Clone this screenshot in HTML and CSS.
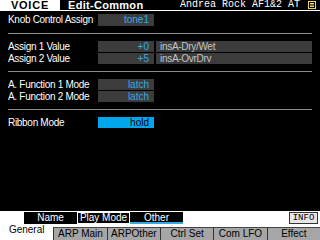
FILE: index.html
```html
<!DOCTYPE html>
<html>
<head>
<meta charset="utf-8">
<link rel="stylesheet" href="styles.css">
</head>
<body>
<div class="screen">
  <header class="top">
    <div class="mode">VOICE</div>
    <div class="title">Edit-Common</div>
    <div class="pname">Andrea Rock AF1&amp;2 AT</div>
    <svg class="icon" width="8" height="8" viewBox="0 0 8 8">
      <rect x="0.5" y="0.5" width="7" height="7" fill="#000" stroke="#ecd35a"/>
      <rect x="2" y="2" width="4" height="1" fill="#ecd35a"/>
      <rect x="2" y="3.5" width="4" height="1" fill="#ecd35a"/>
      <rect x="2" y="5" width="4" height="1" fill="#ecd35a"/>
    </svg>
  </header>
  <div class="rule-top"></div>
  <main class="content">
    <div class="row r1"><span class="label">Knob Control Assign</span><span class="val">tone1</span></div>
    <div class="sep"></div>
    <div class="group">
      <div class="row"><span class="label">Assign 1 Value</span><span class="val">+0</span><span class="wide">insA-Dry/Wet</span></div>
      <div class="row"><span class="label">Assign 2 Value</span><span class="val">+5</span><span class="wide">insA-OvrDrv</span></div>
    </div>
    <div class="sep"></div>
    <div class="group">
      <div class="row"><span class="label">A. Function 1 Mode</span><span class="val">latch</span></div>
      <div class="row"><span class="label">A. Function 2 Mode</span><span class="val">latch</span></div>
    </div>
    <div class="sep"></div>
    <div class="group">
      <div class="row"><span class="label">Ribbon Mode</span><span class="val sel">hold</span></div>
    </div>
  </main>
  <div class="subbar">
    <span class="sub">Name</span>
    <span class="sub boxed">Play Mode</span>
    <span class="sub current">Other</span>
    <span class="info">INFO</span>
  </div>
  <nav class="tabs">
    <span class="tab active">General</span>
    <span class="tab">ARP Main</span>
    <span class="tab">ARPOther</span>
    <span class="tab">Ctrl Set</span>
    <span class="tab">Com LFO</span>
    <span class="tab">Effect</span>
  </nav>
</div>
</body>
</html>
```

FILE: styles.css
```css
* { box-sizing: border-box; margin: 0; padding: 0; }
html, body { margin: 0; background: #000; }
body { width: 320px; height: 240px; overflow: hidden; font-family: "Liberation Sans", Arial, sans-serif; }

.screen { width: 320px; height: 240px; display: flex; flex-direction: column; background: #000; color: #fff; }

.top { height: 10px; display: flex; align-items: flex-start; }
.mode { width: 60px; height: 10px; background: #fff; color: #000; font-weight: bold; font-size: 11px; line-height: 11px; text-align: center; letter-spacing: 0.8px; overflow: hidden; }
.title { margin-left: 8px; font-weight: bold; font-size: 11px; line-height: 11px; letter-spacing: 0.3px; height: 10px; overflow: hidden; }
.pname { margin-left: auto; font-family: "Liberation Mono", monospace; font-size: 10px; line-height: 10px; height: 10px; }
.icon { display: block; margin: 1px 4px 0 8px; }
.rule-top { height: 1px; background: #fff; }

.content { flex: 1; padding: 0 8px; }
.row { display: flex; align-items: stretch; height: 11px; font-size: 10px; line-height: 11px; letter-spacing: -0.3px; }
.r1 { margin-top: 3px; height: 12px; line-height: 12px; }
.group { margin-top: 7px; display: flex; flex-direction: column; gap: 1px; }
.sep { height: 1px; background: #8c8c8c; margin-top: 7px; }
.label { width: 90px; color: #fff; }
.val { width: 56px; background: #3c3c3c; color: #35a9e4; text-align: right; padding-right: 5px; letter-spacing: 0; }
.val.sel { background: #00a6ec; color: #000; }
.wide { width: 156px; margin-left: 2px; background: #3c3c3c; color: #c4c4c4; padding-left: 4px; }

.subbar { height: 16px; background: #fff; display: flex; align-items: flex-start; padding: 1px 2px 0 24px; }
.sub { width: 53px; height: 12px; background: #000; color: #fff; font-size: 10px; line-height: 11px; text-align: center; }
.sub.boxed { border: 1px solid #fff; line-height: 10px; }
.sub.current { border-bottom: 2px solid #35a9e4; }
.info { margin-left: auto; width: 29px; height: 12px; background: #e6e6e6; border: 1px solid #333; color: #000; font-family: "Liberation Mono", monospace; font-size: 9px; line-height: 10px; text-align: center; }

.tabs { height: 13px; display: grid; grid-template-columns: repeat(6, 1fr); }
.tab { background: #a6a6a6; color: #000; border-left: 1px solid #333; border-top: 1px solid #444; font-size: 10px; line-height: 12px; text-align: center; }
.tab.active { background: #fff; border: 0; line-height: 11px; margin-top: -3px; height: 16px; }
```
